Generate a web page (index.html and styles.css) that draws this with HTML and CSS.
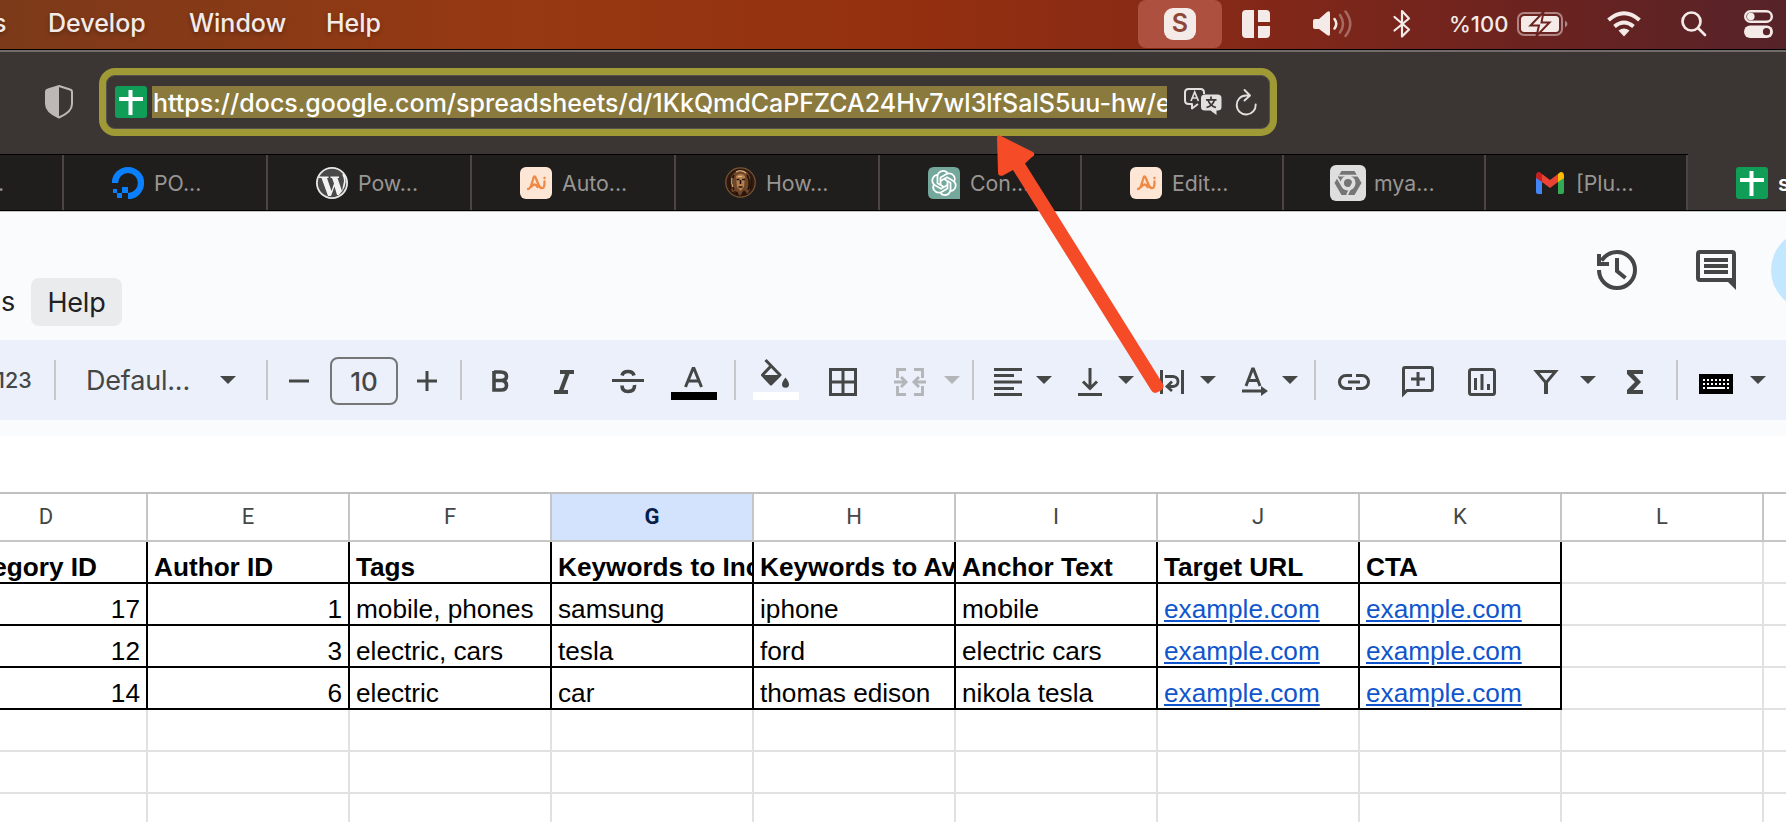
FILE: index.html
```html
<!DOCTYPE html>
<html lang="en">
<head>
<meta charset="utf-8">
<title>Spreadsheet</title>
<link rel="stylesheet" href="styles.css">
</head>
<body>
<svg class="defs" width="0" height="0">
  <symbol id="caret" viewBox="0 0 16 8"><path d="M0 0H16L8 8Z"/></symbol>
  <symbol id="sheets" viewBox="0 0 32 32"><rect width="32" height="32" rx="3" fill="#0f9d58"/><path d="M4 11h24v4H4zM13.5 4h4v25h-4z" fill="#fff"/></symbol>
  <symbol id="ai" viewBox="0 0 32 32"><rect width="32" height="32" rx="6" fill="#fde6d6"/><path d="M8 22C11 22 11.500 17 13 12.500Q14.500 6.500 16.200 12L18.200 17C20 22 25 24 24.500 14.500M11 20Q15 15 17.500 20" fill="none" stroke="#ee8a45" stroke-width="2.300" stroke-linecap="round" stroke-linejoin="round"/><circle cx="24.500" cy="11" r="1.200" fill="#ee8a45"/></symbol>
</svg>

<header class="menubar">
  <span class="menu m-s">s</span><span class="menu m-dev">Develop</span><span class="menu m-win">Window</span><span class="menu m-help">Help</span>
  <div class="status">
    <div class="pill"><b>S</b></div>
    <svg class="ml-20" width="28" height="28" viewBox="0 0 28 28"><path d="M4 0H12V28H4Q0 28 0 24V4Q0 0 4 0ZM16 0H24Q28 0 28 4V12H16ZM16 16H28V24Q28 28 24 28H16Z"/></svg>
    <svg class="ml-43" width="39" height="28" viewBox="0 0 39 28"><path d="M0 11Q0 9 2 9H6L14 2Q17 0 17 3V24Q17 27 14 25L6 19H2Q0 19 0 17Z"/><g fill="none" stroke="#f4ebe9" stroke-width="2.500" stroke-linecap="round"><path d="M21.500 9Q25 14 21.500 18.500"/><path d="M27 5Q33 14 27 22.500M32.500 1.500Q42 14 32.500 26" opacity=".35"/></g></svg>
    <svg class="ml-41" width="18" height="30" viewBox="0 0 18 30"><path d="M1.500 8L16 20.500L9 27.500V2L16 9.500L1.500 21.500" fill="none" stroke="#f4ebe9" stroke-width="2.200" stroke-linejoin="round" stroke-linecap="round"/></svg>
    <span class="percent">%100</span>
    <svg class="batt" width="51" height="26" viewBox="0 0 51 26"><rect x="1" y="2" width="44" height="22" rx="6" fill="none" stroke="#b08483" stroke-width="2"/><path d="M48 9.500Q53 13 48 16.500Z" fill="#b08483"/><rect x="4" y="5" width="38" height="16" rx="3.500"/><path d="M26.500 1L13.500 14.500H22L19.500 25L32.500 11.500H24.500Z" stroke="#6c231f" stroke-width="2"/></svg>
    <svg class="ml-39" width="34" height="26" viewBox="0 0 34 26"><g fill="none" stroke="#f4ebe9" stroke-width="4"><path d="M1.500 9Q17-4.500 32.500 9"/><path d="M7.500 15.500Q17 7.500 26.500 15.500"/></g><path d="M11.500 19.500Q17 15.500 22.500 19.500L17 25.500Z"/></svg>
    <svg class="ml-40" width="26" height="26" viewBox="0 0 26 26"><g fill="none" stroke="#f4ebe9" stroke-width="2.700" stroke-linecap="round"><circle cx="10.500" cy="10.500" r="9"/><path d="M17.500 17.500L24 24"/></g></svg>
    <svg class="ml-37" width="29" height="28" viewBox="0 0 29 28"><rect x="1.200" y="1.200" width="26.600" height="10.600" rx="5.300" fill="none" stroke="#f4ebe9" stroke-width="2.400"/><circle cx="6.800" cy="6.500" r="3.800"/><rect y="15.500" width="29" height="12.500" rx="6.200"/><circle cx="22.500" cy="21.700" r="3.600" fill="#5a2327"/></svg>
  </div>
</header>

<div class="browserbar">
  <svg class="shield" width="28" height="34" viewBox="0 0 28 34"><path d="M14 1L25 4.500Q27 5 27 7V19Q27 27 14 32.500Q1 27 1 19V7Q1 5 3 4.500Z" fill="none" stroke="#bdb8b6" stroke-width="2"/><path d="M14 1L3 4.500Q1 5 1 7V19Q1 27 14 32.500Z" fill="#bdb8b6"/></svg>
  <div class="urlbox">
    <svg width="32" height="32"><use href="#sheets"/></svg>
    <div class="url">https://docs.google.com/spreadsheets/d/1KkQmdCaPFZCA24Hv7wl3lfSalS5uu-hw/e</div>
    <svg class="translate" width="38" height="28" viewBox="0 0 38 28"><path d="M14 16L8 20.500V16H5Q1 16 1 12.500V4.500Q1 1 4.500 1H16.500Q20 1 20 4.500V6" fill="none" stroke="#e2e0df" stroke-width="2" stroke-linejoin="round"/><path d="M21 6.500H33.500Q37.500 6.500 37.500 10V19Q37.500 22.500 33.500 22.500H32.500V27L26.500 22.500H21Q17 22.500 17 19V10Q17 6.500 21 6.500Z" fill="#e2e0df"/><path d="M7 13L10.700 4L14.400 13M8.300 10H13" fill="none" stroke="#e2e0df" stroke-width="1.700"/><path d="M27 8.500V11.500M22 11.800H32.500M30.500 12Q28.500 18 22.500 19.500M24 12Q26 18 32 19.500" fill="none" stroke="#3b3633" stroke-width="1.700"/></svg>
    <svg class="reload" width="22" height="27" viewBox="0 0 22 27"><path d="M14.500 6.500H11A9.500 9.500 0 1 0 20.700 15.500M9.500 1L15 6.500L9.500 11.500" fill="none" stroke="#e2e0df" stroke-width="1.900" stroke-linecap="round" stroke-linejoin="round"/></svg>
  </div>
</div>

<nav class="tabs">
  <div class="tab first"><span>.</span></div>
  <div class="tab"><svg width="32" height="32" viewBox="0 0 32 32"><path d="M3 16A13 13 0 1 1 16 29" fill="none" stroke="#0a80ff" stroke-width="6.200"/><path d="M10 20h6v6h-6zM5 26h5v5H5zM1 22h4v4H1z" fill="#0a80ff"/></svg><span>PO...</span></div>
  <div class="tab"><svg width="32" height="32" viewBox="0 0 32 32"><circle cx="16" cy="16" r="16" fill="#e9e9e9"/><circle cx="16" cy="16" r="14.200" fill="#4a4a4a"/><path d="M3 9.500H12.500V11H11L15.500 24L18 16.500L16 11H14.500V9.500H23V11H21.500L26 24L28 14Q28 11 26.500 8Q27 4 29.500 10Q31 20 23 28L21 28L18.500 19.500L15 29H12L5.500 11H3Z" fill="#f2f2f2"/></svg><span>Pow...</span></div>
  <div class="tab"><svg width="32" height="32"><use href="#ai"/></svg><span>Auto...</span></div>
  <div class="tab"><svg width="32" height="32" viewBox="0 0 32 32"><circle cx="16.500" cy="15.500" r="14.700" fill="#2e1a10" stroke="#7a5534" stroke-width="1.200"/><path d="M8 25Q3 12 10 6Q17 0 24 6Q30 14 24 27L20 23L16 29L12 24Z" fill="#70472a"/><path d="M12 9Q17 5 21 9L20 20L16.500 24L13 20Z" fill="#b5804f"/><path d="M12.500 12.500h3M18 12.500h3M14.500 20h4M10 8Q6 15 10 23M23 8Q27 15 24 23M16.500 13v4M13 25v3M20 25v3M6 12Q5 17 7 22M27 12Q28 17 26 22" stroke="#24120a" stroke-width="1.600" fill="none"/><path d="M12 5Q17 2 22 6M8 11Q7 16 9 20M14 9.500h4" stroke="#e5b980" stroke-width="1.100" fill="none"/></svg><span>How...</span></div>
  <div class="tab narrow"><svg width="32" height="32" viewBox="0 0 32 32"><path d="M6 0H26Q32 0 32 6V32H6Q0 32 0 26V6Q0 0 6 0Z" fill="#74a89c"/><g fill="none" stroke="#fff" stroke-width="1.800" stroke-linejoin="round"><g id="k"><path d="M12.500 18V10.500L18.500 7Q23 5 26 9Q27.500 11.500 26.500 14"/></g><use href="#k" transform="rotate(60 16 16)"/><use href="#k" transform="rotate(120 16 16)"/><use href="#k" transform="rotate(180 16 16)"/><use href="#k" transform="rotate(240 16 16)"/><use href="#k" transform="rotate(300 16 16)"/></g></svg><span>Con...</span></div>
  <div class="tab narrow"><svg width="32" height="32"><use href="#ai"/></svg><span>Edit...</span></div>
  <div class="tab narrow"><svg class="wide" width="36" height="36" viewBox="0 0 36 36"><rect width="36" height="36" rx="6" fill="#dedede"/><path d="M11.500 6H24.500L31.500 18L24.500 30H11.500L4.500 18Z" fill="#757575"/><circle cx="18" cy="18" r="7.500" fill="#dedede"/><circle cx="18" cy="18" r="4" fill="#757575"/><path d="M9 10.700H28M24.500 14.500L17 30M11.800 20L5.500 9.500" stroke="#dedede" stroke-width="1.800"/></svg><span>mya...</span></div>
  <div class="tab narrow"><svg width="32" height="32" viewBox="0 0 32 32"><path d="M2 10V25Q2 27 4 27H8V14Z" fill="#4285f4"/><path d="M30 10V25Q30 27 28 27H24V14Z" fill="#34a853"/><path d="M8 7V15L16 21L24 15V7L16 13Z" fill="#ea4335"/><path d="M2 9Q2 5 5 5Q6 5 8 7V15L2 11Z" fill="#c5221f"/><path d="M30 9Q30 5 27 5Q26 5 24 7V15L30 11Z" fill="#fbbc04"/></svg><span class="plu">[Plu...</span></div>
  <div class="tab active"><svg width="32" height="32"><use href="#sheets"/></svg><span>s</span></div>
</nav>

<section class="docbar">
  <span class="docmenu">s</span><span class="dochelp">Help</span>
  <svg class="history" width="40" height="40" viewBox="0 0 40 40" fill="none" stroke="#444746" stroke-width="4"><path d="M2 20A18 18 0 1 0 20 2Q10.500 2 4.500 10.500M2 4V14H12M20 8V21L28.500 28"/></svg>
  <svg class="comments" width="40" height="40" viewBox="0 0 40 40"><path d="M4 0H36Q40 0 40 4V40L32 32H4Q0 32 0 28V4Q0 0 4 0ZM4 4V28H36V4Z" fill="#444746" fill-rule="evenodd"/><path d="M8 8H32V12H8ZM8 14H32V18H8ZM8 20H32V24H8Z" fill="#444746"/></svg>
  <i class="meet"></i>
</section>

<section class="toolbar">
  <span class="fmt">123</span><i class="sep"></i>
  <span class="font">Defaul...</span><svg class="caret"><use href="#caret"/></svg>
  <i class="sep ml-30"></i>
  <svg class="ml-21" width="20" height="40" viewBox="0 0 20 40"><path d="M0 19.500H20V22.500H0Z"/></svg>
  <span class="size">10</span>
  <svg class="ml-19" width="20" height="40" viewBox="0 0 20 40"><path d="M0 19.500H8.500V11H11.500V19.500H20V22.500H11.500V31H8.500V22.500H0Z"/></svg>
  <i class="sep ml-23"></i>
  <svg class="ml-30" width="18" height="40" viewBox="0 0 18 40"><path d="M2 12H8.500Q14.500 12 14.500 16.600Q14.500 20.500 9 20.500H2M2 20.500H9.500Q14.500 20.800 14.500 25.500Q14.500 30 9 30H2V11" fill="none" stroke="#444746" stroke-width="3.600"/></svg>
  <svg class="ml-44" width="20" height="40" viewBox="0 0 20 40"><path d="M6 10H20V14H15.500L9.500 30H14V34H0V30H5L11 14H6Z"/></svg>
  <svg class="ml-38" width="32" height="40" viewBox="0 0 32 40"><path d="M0 19H32V22H0Z"/><path d="M10 15.500Q11 11.500 16 11.500Q21 11.500 22 15.500M10 25.500Q10 31.500 16 31.500Q23 31.500 22.500 25" fill="none" stroke="#444746" stroke-width="3.600"/></svg>
  <svg class="ml-27" width="46" height="40" viewBox="0 0 46 40"><path d="M0 32H46V40H0Z" fill="#000"/><path d="M14.500 27L22 8.500H23L30.500 27M17 21H28" fill="none" stroke="#444746" stroke-width="3"/></svg>
  <i class="sep ml-17"></i>
  <svg class="ml-17" width="46" height="42" viewBox="0 0 46 42"><path d="M0 33H46V41H0Z" fill="#fff"/><path d="M12.500 1L27 16L18 25L9.500 16L18 7" fill="none" stroke="#444746" stroke-width="3" stroke-linejoin="round"/><path d="M9 16H27L18 26ZM32.500 18.500Q36 23 36 25.200A3.500 3.500 0 0 1 29 25.200Q29 23 32.500 18.500Z"/></svg>
  <svg class="ml-30" width="28" height="40" viewBox="0 0 28 40"><path d="M1.500 9.500H26.500V34.500H1.500ZM14 9V35M1 22H27" fill="none" stroke="#444746" stroke-width="3"/></svg>
  <svg class="ml-37 muted" width="32" height="40" viewBox="0 0 32 40"><path d="M3.500 18V9.500H12M20 9.500H28.500V18M3.500 26V34.500H12M20 34.500H28.500V26M0 22H11M7 17L12 22L7 27M32 22H21M25 17L20 22L25 27" fill="none" stroke="#b3b5b9" stroke-width="2.900"/></svg>
  <svg class="caret muted ml-18"><use href="#caret"/></svg>
  <i class="sep ml-12"></i>
  <svg class="ml-20" width="28" height="40" viewBox="0 0 28 40"><path d="M0 8H28V11H0ZM0 14H20V17H0ZM0 20.500H28V23.500H0ZM0 27H20V30H0ZM0 33H28V36H0Z"/></svg>
  <svg class="caret ml-14"><use href="#caret"/></svg>
  <svg class="ml-26" width="24" height="40" viewBox="0 0 24 40"><path d="M0 33H24V36H0Z"/><path d="M12 8V28M5 21.500L12 28.500L19 21.500" fill="none" stroke="#444746" stroke-width="3"/></svg>
  <svg class="caret ml-16"><use href="#caret"/></svg>
  <svg class="ml-26" width="24" height="40" viewBox="0 0 24 40"><path d="M0 10H3V34H0ZM21 10H24V34H21Z"/><path d="M5 16.500H13Q18 17 18 21.500Q18 26 13 26.500H7M12 21.500L7 26.500L12 31" fill="none" stroke="#444746" stroke-width="2.800"/></svg>
  <svg class="caret ml-16"><use href="#caret"/></svg>
  <svg class="ml-26" width="26" height="40" viewBox="0 0 26 40"><path d="M4 26L10.500 9H11.500L18 26M6 20.500H16" fill="none" stroke="#444746" stroke-width="2.900"/><path d="M0 29.500H19V26L26 31L19 36V32.500H0Z"/></svg>
  <svg class="caret ml-14"><use href="#caret"/></svg>
  <i class="sep ml-16"></i>
  <svg class="ml-22" width="32" height="40" viewBox="0 0 32 40"><path d="M14 15.500H8A6.500 6.500 0 0 0 8 28.500H14M18 15.500H24A6.500 6.500 0 0 1 24 28.500H18M10 22H22" fill="none" stroke="#444746" stroke-width="3.100"/></svg>
  <svg class="ml-32" width="32" height="40" viewBox="0 0 32 40"><path d="M1.500 34V9Q1.500 7.500 3 7.500H29Q30.500 7.500 30.500 9V29Q30.500 30.500 29 30.500H5ZM16 12V26M9 19H23" fill="none" stroke="#444746" stroke-width="3"/></svg>
  <svg class="ml-34" width="28" height="40" viewBox="0 0 28 40"><rect x="1.500" y="9.500" width="25" height="25" rx="2" fill="none" stroke="#444746" stroke-width="3"/><path d="M6 18H9V30H6ZM12.500 14H15.500V30H12.500ZM19 24H22V30H19Z"/></svg>
  <svg class="ml-38" width="24" height="40" viewBox="0 0 24 40"><path d="M2.500 11.500H21.500L12 23Z" fill="none" stroke="#444746" stroke-width="3"/><path d="M10 21H14V34H10Z"/></svg>
  <svg class="caret ml-22"><use href="#caret"/></svg>
  <svg class="ml-31" width="16" height="40" viewBox="0 0 16 40"><path d="M0 10H16V14H6.500L14 22L6.500 30H16V34H0V30L8 22L0 14Z"/></svg>
  <i class="sep ml-33"></i>
  <svg class="ml-21" width="34" height="40" viewBox="0 0 34 40"><path d="M0 14H34V34H0Z" fill="#000"/><path d="M4 20H30M4 24H30" stroke="#fff" stroke-width="2" stroke-dasharray="2 2"/><path d="M4 28H6M8 28H26M28 28H30" stroke="#fff" stroke-width="2"/></svg>
  <svg class="caret ml-17"><use href="#caret"/></svg>
</section>

<main class="sheet">
  <div class="row head"><div>D</div><div>E</div><div>F</div><div class="sel">G</div><div>H</div><div>I</div><div>J</div><div>K</div><div>L</div><div></div></div>
  <div class="row data bold"><div class="right idhead">Category ID</div><div>Author ID</div><div>Tags</div><div>Keywords to Include</div><div>Keywords to Avoid</div><div>Anchor Text</div><div>Target URL</div><div>CTA</div><div></div><div></div></div>
  <div class="row data"><div class="right">17</div><div class="right">1</div><div>mobile, phones</div><div>samsung</div><div>iphone</div><div>mobile</div><div><a>example.com</a></div><div><a>example.com</a></div><div></div><div></div></div>
  <div class="row data"><div class="right">12</div><div class="right">3</div><div>electric, cars</div><div>tesla</div><div>ford</div><div>electric cars</div><div><a>example.com</a></div><div><a>example.com</a></div><div></div><div></div></div>
  <div class="row data"><div class="right">14</div><div class="right">6</div><div>electric</div><div>car</div><div>thomas edison</div><div>nikola tesla</div><div><a>example.com</a></div><div><a>example.com</a></div><div></div><div></div></div>
  <div class="row"><div></div><div></div><div></div><div></div><div></div><div></div><div></div><div></div><div></div><div></div></div>
  <div class="row"><div></div><div></div><div></div><div></div><div></div><div></div><div></div><div></div><div></div><div></div></div>
  <div class="row"><div></div><div></div><div></div><div></div><div></div><div></div><div></div><div></div><div></div><div></div></div>
</main>

<svg class="arrow" width="180" height="270" viewBox="990 130 180 270"><path d="M997 138Q997 134 1001 136L1033 152Q1036 155 1032 157L1025 163.500L1163 384Q1165 388 1160 391L1157 392.500Q1153 394 1151 390L1013 170L1003 175.500Q998 177 998 172Z" fill="#f54b27"/></svg>
</body>
</html>
```
FILE: styles.css
```css
* { box-sizing: border-box; }
body {
  margin: 0;
  width: 1786px;
  height: 822px;
  overflow: hidden;
  position: relative;
  background: #fff;
  font-family: Inter, "Liberation Sans", sans-serif;
}
svg { display: block; flex: none; overflow: visible; }
.defs { position: absolute; }

/* system menu bar */
.menubar {
  height: 50px;
  display: flex;
  border-bottom: 1px solid #000;
  background: linear-gradient(90deg, #7c3a1a 0, #973912 520px, #94300f 900px, #842818 1250px, #6c231f 1520px, #562329 1786px);
  color: #f4ebe9;
  white-space: nowrap;
}
.menu { font-size: 25px; line-height: 46px; font-weight: 500; text-shadow: 0 2px 4px rgba(0, 0, 0, .3); }
.m-s { width: 48px; margin-left: -7px; }
.m-dev { width: 141px; margin-left: 7px; }
.m-win { width: 137px; }
.m-help { width: 60px; }
.status { margin-left: auto; width: 648px; height: 48px; display: flex; align-items: center; fill: #f4ebe9; }
.pill { width: 84px; height: 48px; border-radius: 8px; background: #ad503f; display: flex; align-items: center; justify-content: center; }
.pill b { width: 32px; height: 32px; border-radius: 9px; background: #f4ebe9; color: #8e4636; font-size: 25px; line-height: 31px; font-weight: 600; text-align: center; }
.percent { width: 60px; margin-left: 38px; font-size: 22px; font-weight: 500; }
.batt { margin-left: 8px; }

/* address bar */
.browserbar { height: 105px; background: #3b3633; border-top: 2px solid #716c6a; border-bottom: 1px solid #000; display: flex; align-items: flex-start; }
.shield { margin: 33px 0 0 45px; }
.urlbox {
  margin: 16px 0 0 26px;
  width: 1178px;
  height: 68px;
  border: 7px solid #9f9a35;
  border-radius: 16px;
  box-shadow: inset 0 0 0 1px #56504f;
  display: flex;
  align-items: center;
  padding-left: 9px;
}
.url { width: 1015px; height: 32px; margin-left: 5px; padding-left: 1px; overflow: hidden; white-space: nowrap; background: #8b7a3e; color: #fff; font-size: 25px; line-height: 34px; font-weight: 500; }
.translate { margin-left: 17px; }
.reload { margin-left: 13px; }

/* browser tabs */
.tabs { height: 56px; display: flex; background: #201e1c; border-bottom: 1px solid #000; box-shadow: 0 1px 0 #c6c5c6; position: relative; }
.tab { width: 204px; flex: none; border-right: 2px solid #4c4544; display: flex; align-items: center; padding: 1px 0 0 48px; color: #989694; font-size: 21.300px; white-space: nowrap; }
.tab span { margin-left: 10px; line-height: 32px; }
.tab.first { width: 64px; padding-left: 0; }
.tab.first span { margin-left: -2px; }
.tab.narrow { width: 202px; }
.tab .wide { margin: 0 -2px; }
.tab.active { width: 98px; border: 0; background: #3b3633; margin-top: -1px; padding-top: 2px; color: #fff; font-weight: 600; overflow: hidden; }

/* document header */
.docbar { height: 129px; background: #f9fbfd; display: flex; align-items: flex-start; overflow: hidden; font-size: 27px; color: #202124; }
.docmenu { flex: none; width: 31px; margin-top: 67px; line-height: 48px; padding-left: 1px; }
.dochelp { flex: none; width: 91px; height: 48px; margin-top: 67px; border-radius: 8px; background: #eaebed; text-align: center; line-height: 50px; letter-spacing: -.2px; }
.history { margin: 39px 0 0 1475px; }
.comments { margin: 39px 0 0 59px; }
.meet { flex: none; width: 80px; height: 80px; margin: 19px 0 0 35px; border-radius: 50%; background: #c2e7ff; }

/* formatting toolbar */
.toolbar { height: 96px; background: linear-gradient(#ecf0fa 80px, #f9fbfd 80px); padding-bottom: 16px; display: flex; align-items: center; fill: #444746; color: #444746; white-space: nowrap; }
.sep { width: 2px; height: 40px; background: #c7c7c7; flex: none; }
.fmt { width: 54px; flex: none; font-size: 21.500px; font-weight: 500; margin-left: -4px; margin-right: 4px; }
.font { width: 134px; margin-left: 30px; font-size: 27px; letter-spacing: -.2px; flex: none; }
.caret { width: 16px; height: 8px; }
.muted { fill: #b3b5b9; }
.size { width: 68px; height: 48px; flex: none; margin: 2px 0 0 21px; border: 2px solid #747775; border-radius: 8px; text-align: center; font-size: 26px; line-height: 45px; font-weight: 500; }
.ml-12 { margin-left: 12px; } .ml-14 { margin-left: 14px; } .ml-16 { margin-left: 16px; }
.ml-17 { margin-left: 17px; } .ml-18 { margin-left: 18px; } .ml-19 { margin-left: 19px; }
.ml-20 { margin-left: 20px; } .ml-21 { margin-left: 21px; } .ml-22 { margin-left: 22px; }
.ml-23 { margin-left: 23px; } .ml-26 { margin-left: 26px; } .ml-27 { margin-left: 27px; }
.ml-30 { margin-left: 30px; } .ml-31 { margin-left: 31px; } .ml-32 { margin-left: 32px; }
.ml-33 { margin-left: 33px; } .ml-34 { margin-left: 34px; } .ml-37 { margin-left: 37px; }
.ml-38 { margin-left: 38px; } .ml-39 { margin-left: 39px; } .ml-40 { margin-left: 40px; }
.ml-41 { margin-left: 41px; } .ml-43 { margin-left: 43px; } .ml-44 { margin-left: 44px; }

/* grid */
.sheet { margin-top: 56px; border-top: 2px solid #c0c0c0; font-family: "Liberation Sans", Arial, sans-serif; }
.row { display: grid; grid-template-columns: 148px repeat(8, 202px) 22px; }
.row > div { height: 42px; border-right: 2px solid #e1e1e1; border-bottom: 2px solid #e1e1e1; overflow: hidden; white-space: nowrap; }
.row.head > div { height: 48px; border-color: #c4c7c5; text-align: center; font: 22px/46px Roboto, sans-serif; color: #444746; }
.row.head > div:first-child { text-indent: -54px; }
.row.head > .sel { background: #d3e3fd; color: #041e49; font-weight: 700; }
.row.data > div { padding: 0 0 0 6px; font-size: 26.200px; line-height: 51px; color: #000; }
.row.data > div:nth-child(-n+8) { border-color: #000; }
.row > div:last-child { border-right: 0; }
.row.data > .right { text-align: right; padding: 0 6px 0 0; }
.row.bold > div { font-weight: 700; }
.row.bold > .idhead { padding-right: 49px; direction: rtl; }
.row a { color: #1155cc; text-decoration: underline; }

.arrow { position: absolute; left: 990px; top: 130px; }
```
